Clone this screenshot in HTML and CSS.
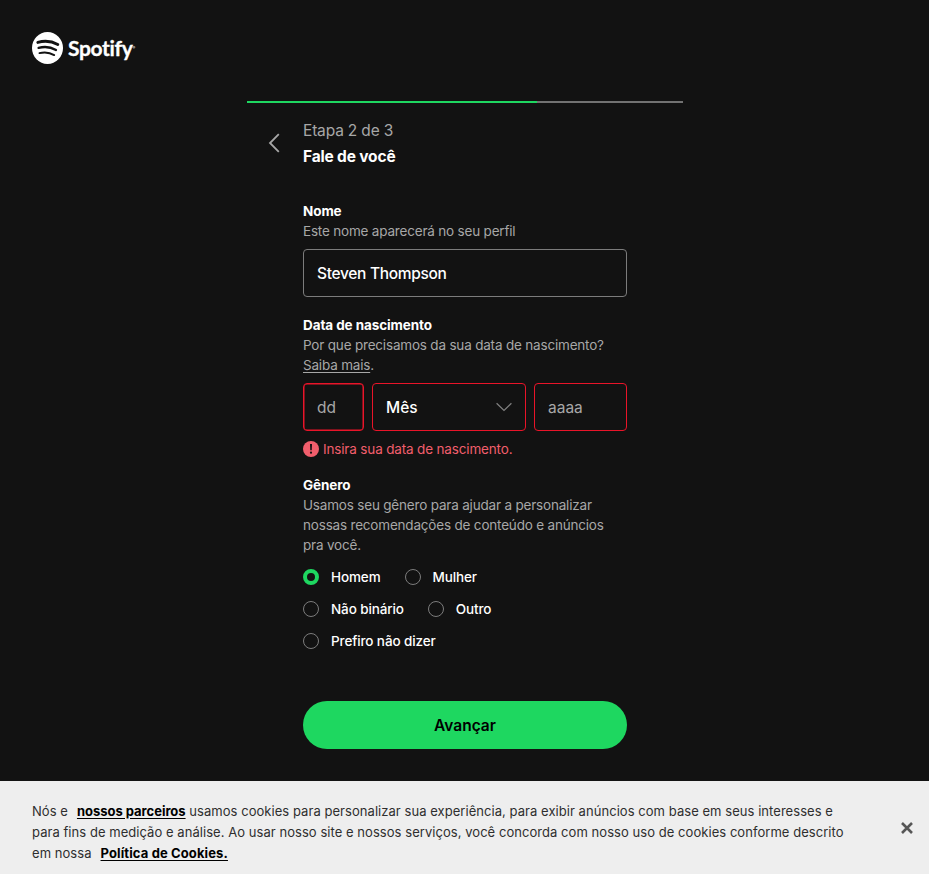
FILE: index.html
```html
<!DOCTYPE html>
<html lang="pt-BR">
<head>
<meta charset="utf-8">
<meta name="viewport" content="width=device-width, initial-scale=1">
<title>Inscrever-se - Spotify</title>
<link rel="stylesheet" href="styles.css">
</head>
<body>
<header class="header">
  <a class="logo" href="#">
    <svg class="logo-mark" viewBox="0 0 31 32" aria-hidden="true">
      <ellipse cx="15.500" cy="16" rx="15.500" ry="16" fill="#fff"/>
      <g fill="none" stroke="#121212" stroke-linecap="round">
        <path d="M5.800 10.400c6.500-1.800 14-1.200 20 2.100" stroke-width="2.900"/>
        <path d="M6.600 15.900c5.700-1.600 12.200-.9 17.400 2.100" stroke-width="2.300"/>
        <path d="M7.400 21.100c5-1.200 10.400-.7 14.800 2" stroke-width="1.900"/>
      </g>
    </svg>
    <span class="logo-word">Spotify</span><span class="logo-reg">®</span>
  </a>
</header>
<main class="signup">
  <div class="progress"><div class="progress-fill"></div></div>
  <div class="step">
    <button class="back" type="button" aria-label="Voltar">
      <svg viewBox="0 0 12 20"><path d="M10.800 1.200 2 10l8.800 8.800" fill="none" stroke="#a7a7a7" stroke-width="1.800"/></svg>
    </button>
    <div class="step-text">
      <div class="step-count">Etapa 2 de 3</div>
      <h1 class="step-title">Fale de você</h1>
    </div>
  </div>
  <form class="form">
    <section class="field">
      <label class="label" for="name">Nome</label>
      <p class="hint">Este nome aparecerá no seu perfil</p>
      <input class="input" id="name" value="Steven Thompson">
    </section>
    <section class="field">
      <div class="label">Data de nascimento</div>
      <p class="hint">Por que precisamos da sua data de nascimento?<br><a class="more" href="#">Saiba mais</a>.</p>
      <div class="date">
        <input class="input day error-border" placeholder="dd" aria-label="Dia">
        <div class="input month error-border"><span>Mês</span>
          <svg viewBox="0 0 16 10"><path d="m.6 1.200 7.400 7.300 7.400-7.300" fill="none" stroke="#808080" stroke-width="1.200"/></svg>
        </div>
        <input class="input year error-border" placeholder="aaaa" aria-label="Ano">
      </div>
      <div class="error">
        <svg viewBox="0 0 16 16"><circle cx="8" cy="8" r="8" fill="#f15e6c"/><path d="M7 3h2l-.25 6.200h-1.500z" fill="#121212"/><circle cx="8" cy="11.700" r="1.100" fill="#121212"/></svg>
        <span>Insira sua data de nascimento.</span>
      </div>
    </section>
    <section class="field">
      <div class="label">Gênero</div>
      <p class="hint">Usamos seu gênero para ajudar a personalizar<br>nossas recomendações de conteúdo e anúncios<br>pra você.</p>
      <div class="radios">
        <label class="radio"><i class="dot on"></i><span>Homem</span></label>
        <label class="radio"><i class="dot"></i><span>Mulher</span></label>
        <label class="radio"><i class="dot"></i><span>Não binário</span></label>
        <label class="radio"><i class="dot"></i><span>Outro</span></label>
        <label class="radio"><i class="dot"></i><span>Prefiro não dizer</span></label>
      </div>
    </section>
    <button class="next" type="button">Avançar</button>
  </form>
</main>
<aside class="cookies">
  <p class="cookie-text">Nós e<a class="partners" href="#">nossos parceiros</a> usamos cookies para personalizar sua experiência, para exibir anúncios com base em seus interesses e<br>para fins de medição e análise. Ao usar nosso site e nossos serviços, você concorda com nosso uso de cookies conforme descrito<br>em nossa<a class="policy" href="#">Política de Cookies.</a></p>
  <button class="close" type="button" aria-label="Fechar"><svg viewBox="0 0 12 12"><path d="m1 1 10 10M11 1 1 11" fill="none" stroke="#565656" stroke-width="2.600"/></svg></button>
</aside>
</body>
</html>
```

FILE: styles.css
```css
* { box-sizing: border-box; }
body {
  margin: 0;
  height: 874px;
  display: flex;
  flex-direction: column;
  background: #121212;
  color: #fff;
  font-family: Inter, "Liberation Sans", sans-serif;
  font-size: 13.5px;
  line-height: 20px;
  overflow: hidden;
}
button { padding: 0; border: 0; background: none; font-family: inherit; }
svg { display: block; flex: none; }
.header { height: 101px; padding: 32px 32px 0; }
.logo { display: flex; align-items: center; height: 32px; color: #fff; text-decoration: none; white-space: nowrap; }
.logo-mark { width: 31px; height: 32px; margin-right: 5px; }
.logo-word { font: 700 21px/32px Lato, sans-serif; letter-spacing: -.35px; margin-top: -1px; -webkit-text-stroke: .3px #fff; }
.logo-reg { font-size: 4px; line-height: 26px; }
.signup { width: 436px; margin-left: 247px; flex: 1; }
.progress { height: 2px; background: #727272; }
.progress-fill { width: 66.6%; height: 2px; background: #1ed760; }
.step { display: flex; align-items: center; height: 52px; margin-top: 14px; }
.back { width: 12px; height: 20px; margin: -1px 23px 0 21px; }
.back svg { width: 12px; height: 20px; }
.step-text { padding-top: 2px; }
.step-count { font-size: 15.5px; line-height: 26px; letter-spacing: -.17px; color: #a7a7a7; white-space: nowrap; }
.step-title { margin: 0; font-size: 15.5px; line-height: 26px; letter-spacing: -.17px; font-weight: 700; white-space: nowrap; }
.form { width: 324px; margin: 32px 0 0 56px; }
.field { margin-bottom: 16px; }
.field:first-child { margin-bottom: 18px; }
.label { display: block; width: max-content; height: 20px; font-weight: 700; letter-spacing: -.09px; white-space: nowrap; }
.hint { margin: 0 0 8px; color: #a7a7a7; letter-spacing: -.19px; white-space: nowrap; }
.more { color: inherit; text-underline-offset: 2px; }
.input {
  display: block;
  width: 100%;
  height: 48px;
  padding: 0 13px;
  border: 1px solid #7c7c7c;
  border-radius: 4px;
  background: #121212;
  color: #fff;
  font: 500 15.5px/46px Inter, sans-serif;
  letter-spacing: -.32px;
  outline: 0;
}
.input::placeholder { color: #a7a7a7; font-weight: 400; opacity: 1; }
.date { display: flex; gap: 8px; }
.error-border { border-color: #e91429; letter-spacing: 0; }
.day { width: 61px; box-shadow: inset 0 0 0 .5px #e91429; }
.month { width: 154px; display: flex; align-items: center; justify-content: space-between; }
.month span { padding-top: 2px; }
.month svg { width: 16px; height: 10px; }
.year { width: 93px; }
.error { display: flex; align-items: center; gap: 4px; height: 20px; margin-top: 8px; color: #f15e6c; letter-spacing: -.16px; white-space: nowrap; }
.error svg { width: 16px; height: 16px; }
.radios { display: flex; flex-wrap: wrap; margin-top: 12px; gap: 12px 24px; padding-right: 60px; }
.radio { display: flex; align-items: center; gap: 12px; height: 20px; font-weight: 500; letter-spacing: -.12px; white-space: nowrap; }
.dot { width: 16px; height: 16px; border: 1px solid #7c7c7c; border-radius: 50%; }
.dot.on { border: 4px solid #1ed760; }
.next { display: block; width: 324px; height: 48px; margin-top: 50px; border-radius: 24px; background: #1ed760; color: #000; font-size: 15.5px; font-weight: 600; }
.cookies { display: flex; align-items: flex-start; justify-content: space-between; height: 93px; flex: none; padding: 20px 16px 0 32px; background: #eee; color: #2e2e2e; }
.cookie-text { margin: 0; font-size: 13px; line-height: 21px; letter-spacing: .05px; white-space: nowrap; }
.cookie-text a { color: #000; font-weight: 700; text-underline-offset: 2px; margin-left: 9px; }
.cookie-text .partners { letter-spacing: -.02px; }
.cookie-text .policy { letter-spacing: .12px; }
.close { width: 12px; height: 12px; margin-top: 21px; }
.close svg { width: 12px; height: 12px; }
```
